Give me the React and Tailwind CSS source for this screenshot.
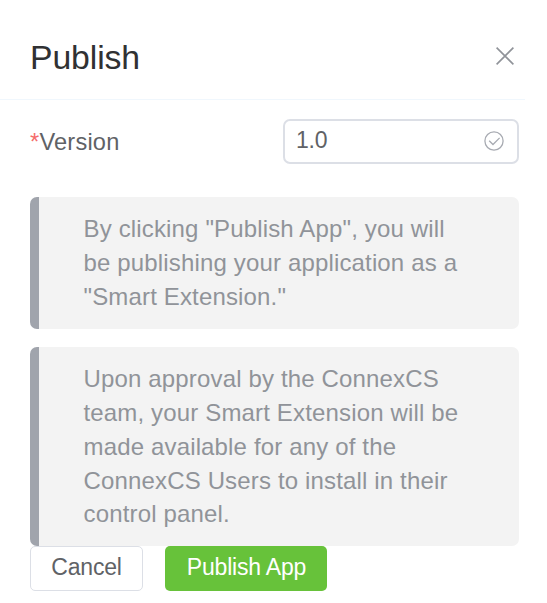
function CloseIcon() {
  return (
    <svg className="size-[18px]" viewBox="0 0 18 18" fill="none" stroke="#909399" strokeWidth="1.6">
      <path d="M0.6 0.6L17.4 17.4M17.4 0.6L0.6 17.4" />
    </svg>
  );
}

function CheckIcon() {
  return (
    <svg className="mb-px size-5" viewBox="0 0 20 20" fill="none" stroke="#a8abb2" strokeWidth="1.3">
      <circle cx="10" cy="10" r="9.1" />
      <path d="M5.2 9.8L9 13.5L15.6 6.9" />
    </svg>
  );
}

function Notice({ lines, className }) {
  return (
    <div
      className={
        "rounded-[7px] border-l-[9px] border-[#a0a4ac] bg-[#f3f3f3] pl-[44.5px] text-[24px] leading-[33.8px] tracking-[0.155px] text-[#909399] " +
        className
      }
    >
      {lines.map((line) => (
        <p key={line} className="whitespace-nowrap">{line}</p>
      ))}
    </div>
  );
}

export default function App() {
  return (
    <div className="h-[603px] w-[547px] overflow-hidden bg-white font-['Liberation_Sans',Arial,sans-serif]">
      <header className="flex h-[100px] w-[525px] items-center justify-between border-b border-[#f0f7fd] pt-[13px] pr-[11px] pl-[30px]">
        <h1 className="pt-[2px] text-[33.75px] leading-10 tracking-[-0.1px] text-[#303133]">Publish</h1>
        <button aria-label="Close">
          <CloseIcon />
        </button>
      </header>
      <main className="w-[519px] pt-[19px] pl-[30px]">
        <div className="flex h-[45px] items-center justify-between">
          <label className="pt-[2px] text-[23.6px] leading-[45px] tracking-[0.2px] text-[#606266]">
            <span className="text-[#f56c6c]">*</span>Version
          </label>
          <div className="flex h-[45px] w-[236px] items-center justify-between rounded-[7px] border-2 border-[#dcdfe6] pr-[13px] pl-[11px]">
            <span className="pb-[3px] text-[23px] leading-9 tracking-[-0.2px] text-[#606266]">1.0</span>
            <CheckIcon />
          </div>
        </div>
        <Notice
          className="mt-[33px] h-[132px] pt-[15px]"
          lines={['By clicking "Publish App", you will', "be publishing your application as a", '"Smart Extension."']}
        />
        <Notice
          className="mt-[18px] h-[199px] pt-[15.2px]"
          lines={[
            "Upon approval by the ConnexCS",
            "team, your Smart Extension will be",
            "made available for any of the",
            "ConnexCS Users to install in their",
            "control panel.",
          ]}
        />
        <div className="flex gap-[22px] text-[23px] tracking-[-0.2px]">
          <button className="h-[45px] w-[113px] rounded-[5px] border border-[#dcdfe6] pb-[2px] text-[#606266]">
            Cancel
          </button>
          <button className="h-[45px] w-[162px] rounded-[5px] bg-[#67c23a] pb-[2px] pl-px text-white">Publish App</button>
        </div>
      </main>
    </div>
  );
}
